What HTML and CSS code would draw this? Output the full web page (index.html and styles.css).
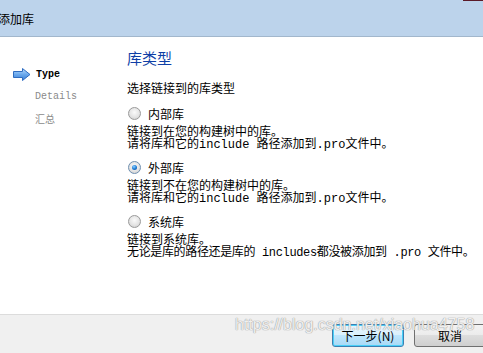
FILE: index.html
```html
<!DOCTYPE html>
<html lang="zh">
<head>
    <meta charset="UTF-8">
    <title>添加库</title>
    <link rel="stylesheet" href="styles.css">
</head>
<body>
    <div class="window">
        <div class="titlebar">
            <span class="title">添加库</span>
        </div>

        <div class="main">
            <ul class="steps">
                <li class="step current">
                    <svg class="arrow" width="18" height="13" viewBox="0 0 18 13">
                        <defs>
                            <linearGradient id="arrowFill" x1="0" y1="0" x2="0" y2="1">
                                <stop offset="0" stop-color="#b9dcff"/>
                                <stop offset="0.5" stop-color="#6aa8ec"/>
                                <stop offset="1" stop-color="#3a7fd6"/>
                            </linearGradient>
                        </defs>
                        <path d="M0.5 3.5 H9.5 V0.5 L17 6.5 L9.5 12.5 V9.5 H0.5 Z" fill="url(#arrowFill)" stroke="#2f6cc0" stroke-width="1"/>
                    </svg>
                    Type
                </li>
                <li class="step">Details</li>
                <li class="step">汇总</li>
            </ul>

            <div class="page">
                <h2 class="page-title">库类型</h2>
                <p class="lead">选择链接到的库类型</p>

                <label class="option"><span class="radio"></span>内部库</label>
                <p class="desc">链接到在您的构建树中的库。<br>请将库和它的include 路径添加到.pro文件中。</p>

                <label class="option"><span class="radio checked"></span>外部库</label>
                <p class="desc">链接到不在您的构建树中的库。<br>请将库和它的include 路径添加到.pro文件中。</p>

                <label class="option"><span class="radio"></span>系统库</label>
                <p class="desc">链接到系统库。<br><span class="tight">无论是库的路径还是库的 includes都没被添加到 .pro 文件中。</span></p>
            </div>
        </div>

        <div class="footer">
            <button class="btn default">下一步(N)</button>
            <button class="btn">取消</button>
            <span class="watermark">https://blog.csdn.net/xiaohua4758</span>
        </div>
    </div>
</body>
</html>
```

FILE: styles.css
```css
body {
    margin: 0;
    padding: 0;
    background: #fff;
    font-family: "Liberation Mono", "Noto Sans CJK SC", monospace;
    font-size: 12px;
    color: #000;
}

.window {
    width: 483px;
    height: 353px;
    overflow: hidden;
    display: flex;
    flex-direction: column;
}

/* title bar */
.titlebar {
    position: relative;
    height: 36px;
    flex: none;
    background: #bcd3eb;
    border-bottom: 1px solid #a2b7cc;
    display: flex;
    align-items: center;
}

.titlebar::after {
    content: "";
    position: absolute;
    top: 0;
    right: 0;
    width: 20px;
    height: 1px;
    background: #5a1a28;
}

.title {
    margin-left: -2px;
    font-family: "Noto Sans CJK SC", sans-serif;
    font-size: 12px;
    color: #000;
}

/* body */
.main {
    flex: 1;
    display: flex;
    background: #fff;
}

.steps {
    width: 127px;
    flex: none;
    list-style: none;
    margin: 0;
    padding: 26px 0 0 0;
}

.step {
    height: 22px;
    display: flex;
    align-items: center;
    padding-left: 35px;
    font-size: 10px;
    color: #8a8a8a;
}

.step.current {
    padding-left: 13px;
    color: #000;
    font-weight: bold;
}

.arrow {
    margin-right: 5px;
}

.page {
    padding-top: 12px;
    white-space: nowrap;
}

.page-title {
    margin: 0;
    font-family: "Noto Sans CJK SC", sans-serif;
    font-size: 15px;
    font-weight: normal;
    line-height: 18px;
    color: #0f3fa6;
}

.lead {
    margin: 16px 0 0 0;
    line-height: 14px;
}

.option {
    display: flex;
    align-items: center;
    height: 14px;
    margin-top: 9px;
    font-family: "Noto Sans CJK SC", sans-serif;
}

.radio {
    width: 11px;
    height: 11px;
    margin: 0 7px 0 1px;
    border: 1px solid #9a9a9a;
    border-radius: 50%;
    background: radial-gradient(circle at 50% 40%, #fafafa 0%, #e4e4e4 55%, #c8c8c8 100%);
    display: flex;
    align-items: center;
    justify-content: center;
}

.radio.checked {
    border-color: #6f8fb0;
}

.radio.checked::after {
    content: "";
    width: 5px;
    height: 5px;
    border-radius: 50%;
    background: radial-gradient(circle at 40% 35%, #8fd0ff 0%, #1f7fd8 50%, #0b3f8c 100%);
}

.desc {
    margin: 7px 0 0 0;
    line-height: 12px;
}

.tight {
    letter-spacing: -0.35px;
}

/* buttons */
.footer {
    position: relative;
    height: 29px;
    flex: none;
    background: #f0f0f0;
    border-top: 1px solid #dcdcdc;
    display: flex;
    align-items: flex-start;
    gap: 10px;
    padding: 9px 0 0 332px;
}

.btn {
    flex: none;
    width: 72px;
    height: 23px;
    padding: 0;
    border: 1px solid #707070;
    border-radius: 3px;
    background: linear-gradient(#f3f3f3, #ebebeb 50%, #dddddd 50%, #cfcfcf);
    font-family: "Noto Sans CJK SC", sans-serif;
    font-size: 12px;
    color: #000;
}

.btn.default {
    border-color: #3c7fb1;
    background: linear-gradient(#eaf6fd, #d9f0fc 50%, #bee6fd 50%, #a7d9f5);
    box-shadow: inset 0 0 0 1px #48d0f8;
}

.watermark {
    position: absolute;
    left: 235px;
    top: 1px;
    font-family: "Liberation Sans", sans-serif;
    font-size: 16px;
    color: rgba(255, 255, 255, 0.85);
    text-shadow: 0 0 1px #9a9a9a, 0 0 1px #9a9a9a;
    white-space: nowrap;
    pointer-events: none;
}
```
